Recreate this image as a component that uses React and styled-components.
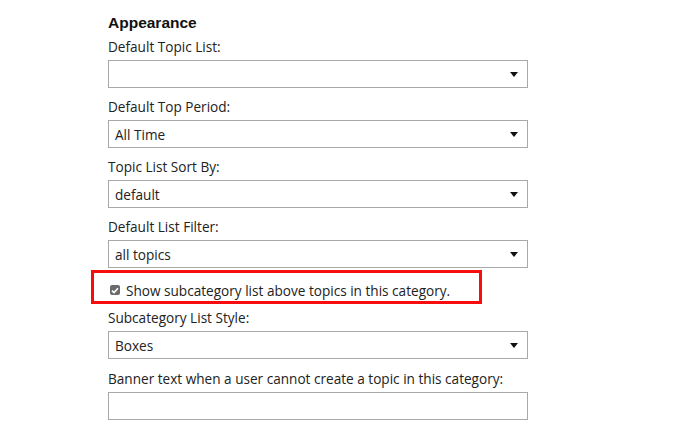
import React from 'react';
import styled, { createGlobalStyle } from 'styled-components';

const GlobalStyle = createGlobalStyle`
  body {
    margin: 0;
    background: #fff;
    font-family: "Open Sans", "Liberation Sans", sans-serif;
    color: #222;
  }
`;

const Page = styled.div`
  padding: 13px 0 0 108px;
  width: 420px;
`;

const Heading = styled.h3`
  margin: 0 0 5px;
  font-family: "Liberation Sans", Arial, sans-serif;
  font-weight: bold;
  font-size: 15.5px;
  line-height: 20px;
  color: #111;
`;

const Field = styled.div`
  display: flex;
  flex-direction: column;
  gap: 4px;
  margin-bottom: ${(p) => p.$space ?? 10}px;
`;

const Label = styled.label`
  font-size: 13.6px;
  line-height: 18px;
  color: #222;
`;

const SelectBox = styled.div`
  box-sizing: border-box;
  height: 28px;
  border: 1px solid #a9a9a9;
  display: flex;
  align-items: center;
  justify-content: space-between;
  padding: 0 9px 0 6px;
  font-size: 13.6px;
  color: #222;
`;

const TextBox = styled.div`
  box-sizing: border-box;
  height: 28px;
  border: 1px solid #a9a9a9;
`;

const CheckRow = styled.div`
  position: relative;
  display: flex;
  align-items: center;
  gap: 6px;
  height: 20px;
  margin: 12px 0 9px;
  padding-left: 2px;
  font-size: 13.6px;
  color: #222;
`;

// red annotation frame drawn over the checkbox row
const Highlight = styled.div`
  position: absolute;
  left: -17px;
  top: -10px;
  width: 391px;
  height: 34px;
  box-sizing: border-box;
  border: 3px solid #f70d0d;
  pointer-events: none;
`;

const Box = styled.span`
  width: 10px;
  height: 10px;
  border-radius: 2px;
  background: #6b6b6b;
  display: inline-flex;
  align-items: center;
  justify-content: center;
`;

const Caret = () => (
  <svg width="8" height="5" viewBox="0 0 8 5">
    <path d="M0 0h8L4 5z" fill="#111" />
  </svg>
);

const Select = ({ value }) => (
  <SelectBox>
    <span>{value}</span>
    <Caret />
  </SelectBox>
);

const fields = [
  { label: 'Default Topic List:', value: '' },
  { label: 'Default Top Period:', value: 'All Time' },
  { label: 'Topic List Sort By:', value: 'default' },
  { label: 'Default List Filter:', value: 'all topics' },
];

export default function App() {
  return (
    <>
      <GlobalStyle />
      <Page>
        <Heading>Appearance</Heading>
        {fields.map((f, i) => (
          <Field key={f.label} $space={i === fields.length - 1 ? 0 : 10}>
            <Label>{f.label}</Label>
            <Select value={f.value} />
          </Field>
        ))}
        <CheckRow>
          <Box>
            <svg width="8" height="7" viewBox="0 0 8 7">
              <path d="M1 3.6l2 2L7 1.2" stroke="#fff" strokeWidth="1.6" fill="none" />
            </svg>
          </Box>
          <span>Show subcategory list above topics in this category.</span>
          <Highlight />
        </CheckRow>
        <Field $space={11}>
          <Label>Subcategory List Style:</Label>
          <Select value="Boxes" />
        </Field>
        <Field>
          <Label>Banner text when a user cannot create a topic in this category:</Label>
          <TextBox />
        </Field>
      </Page>
    </>
  );
}
